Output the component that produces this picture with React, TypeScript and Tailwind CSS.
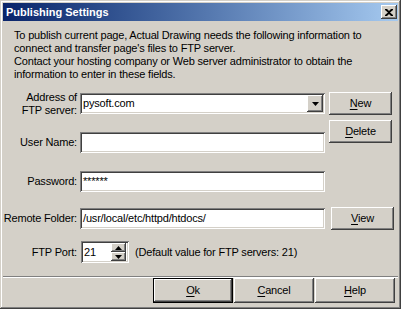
import React from "react";

const raised =
  "shadow-[inset_-1px_-1px_#404040,inset_1px_1px_#ffffff,inset_-2px_-2px_#808080,inset_2px_2px_#d4d0c8]";
const sunken =
  "shadow-[inset_1px_1px_#808080,inset_-1px_-1px_#ffffff,inset_2px_2px_#404040,inset_-2px_-2px_#d4d0c8]";

function Btn({
  label,
  u,
  className = "",
}: {
  label: string;
  u: number;
  className?: string;
}) {
  return (
    <div
      className={`flex items-center justify-center bg-[#d4d0c8] text-black ${raised} ${className}`}
    >
      <span>
        {label.slice(0, u)}
        <span className="underline underline-offset-[2px]">{label[u]}</span>
        {label.slice(u + 1)}
      </span>
    </div>
  );
}

function Input({ value, w = "w-[245px]" }: { value?: string; w?: string }) {
  return (
    <div className={`${w} h-[21px] bg-white ${sunken} flex items-center pl-[3px] text-black whitespace-nowrap`}>
      {value}
    </div>
  );
}

export default function App() {
  return (
    <div
      className="w-[401px] h-[309px] bg-[#d4d0c8] p-[3px] flex flex-col text-[11px] tracking-[-0.18px] text-black shadow-[inset_-1px_-1px_#404040,inset_1px_1px_#d4d0c8,inset_-2px_-2px_#808080,inset_2px_2px_#ffffff]"
      style={{ fontFamily: '"Liberation Sans", Arial, sans-serif' }}
    >
      {/* Title bar */}
      <div className="h-[18px] flex items-center justify-between pl-[3px] pr-[1px] bg-gradient-to-r from-[#0a246a] to-[#a6caf0]">
        <span className="text-white font-bold text-[11px] tracking-[0px]">Publishing Settings</span>
        <div className={`w-[16px] h-[14px] bg-[#d4d0c8] ${raised} flex items-center justify-center`}>
          <svg width="8" height="7" viewBox="0 0 8 7">
            <path
              d="M0 0h2l2 2 2-2h2v1L5 3.5 8 6v1H6L4 5 2 7H0V6l3-2.5L0 1z"
              fill="#000"
            />
          </svg>
        </div>
      </div>

      {/* Description */}
      <div className="pl-[11px] pt-[8px] leading-[13px] whitespace-nowrap">
        <div>To publish current page, Actual Drawing needs the following information to</div>
        <div>connect and transfer page's files to FTP server.</div>
        <div>Contact your hosting company or Web server administrator to obtain the</div>
        <div>information to enter in these fields.</div>
      </div>

      {/* Form */}
      <div className="flex mt-[11px]">
        <div className="flex flex-col">
          <div className="flex items-center h-[21px] mt-[1px]">
            <div className="w-[75px] text-right leading-[13px] pr-[1px] whitespace-nowrap">
              <div>Address of</div>
              <div>FTP server:</div>
            </div>
            <div className={`ml-[2px] w-[245px] h-[21px] bg-white ${sunken} flex items-center justify-between pl-[3px] pr-[2px]`}>
              <span>pysoft.com</span>
              <div className={`w-[16px] h-[17px] bg-[#d4d0c8] ${raised} flex items-center justify-center`}>
                <svg width="7" height="4" viewBox="0 0 7 4">
                  <path d="M0 0h7L3.5 4z" fill="#000" />
                </svg>
              </div>
            </div>
          </div>

          <div className="flex items-center h-[21px] mt-[18px]">
            <div className="w-[75px] text-right pr-[1px] whitespace-nowrap">User Name:</div>
            <div className="ml-[2px]">
              <Input />
            </div>
          </div>

          <div className="flex items-center h-[21px] mt-[18px]">
            <div className="w-[75px] text-right pr-[1px] whitespace-nowrap">Password:</div>
            <div className="ml-[2px]">
              <Input value="******" />
            </div>
          </div>

          <div className="flex items-center h-[21px] mt-[16px]">
            <div className="w-[75px] text-right pr-[1px] whitespace-nowrap">Remote Folder:</div>
            <div className="ml-[2px]">
              <Input value="/usr/local/etc/httpd/htdocs/" />
            </div>
          </div>

          <div className="flex items-center h-[22px] mt-[12px]">
            <div className="w-[75px] text-right pr-[1px] whitespace-nowrap">FTP Port:</div>
            <div className={`ml-[3px] w-[48px] h-[22px] bg-white ${sunken} flex items-center justify-between pl-[3px] pr-[3px]`}>
              <span>21</span>
              <div className="flex flex-col">
                <div className={`w-[15px] h-[9px] bg-[#d4d0c8] ${raised} flex items-center justify-center`}>
                  <svg width="7" height="4" viewBox="0 0 7 4">
                    <path d="M0 4h7L3.5 0z" fill="#000" />
                  </svg>
                </div>
                <div className={`w-[15px] h-[9px] bg-[#d4d0c8] ${raised} flex items-center justify-center`}>
                  <svg width="7" height="4" viewBox="0 0 7 4">
                    <path d="M0 0h7L3.5 4z" fill="#000" />
                  </svg>
                </div>
              </div>
            </div>
            <span className="ml-[6px] whitespace-nowrap">(Default value for FTP servers: 21)</span>
          </div>
        </div>

        <div className="flex flex-col ml-[4px]">
          <Btn label="New" u={0} className="w-[63px] h-[23px]" />
          <Btn label="Delete" u={0} className="w-[63px] h-[23px] mt-[5px]" />
          <Btn label="View" u={0} className="w-[63px] h-[23px] mt-[64px] ml-[2px]" />
        </div>
      </div>

      {/* Separator */}
      <div className="mt-[13px] h-[2px] border-t border-t-[#808080] border-b border-b-white" />

      {/* Bottom buttons */}
      <div className="flex justify-end gap-[1px] pr-[3px] mt-[0px]">
        <div className="w-[80px] h-[25px] border border-black">
          <Btn label="Ok" u={0} className="w-full h-full" />
        </div>
        <Btn label="Cancel" u={0} className="w-[80px] h-[25px]" />
        <Btn label="Help" u={0} className="w-[80px] h-[25px]" />
      </div>
    </div>
  );
}
